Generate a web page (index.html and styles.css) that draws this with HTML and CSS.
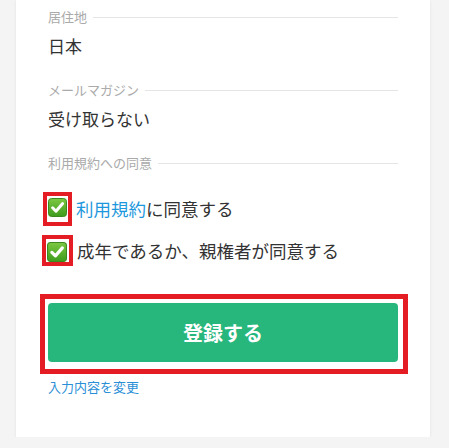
FILE: index.html
```html
<!DOCTYPE html>
<html lang="ja">
<head>
<meta charset="utf-8">
<link rel="stylesheet" href="styles.css">
</head>
<body>
<div class="card">
  <div class="field">
    <div class="field-label">居住地</div>
    <div class="field-value">日本</div>
  </div>
  <div class="field">
    <div class="field-label">メールマガジン</div>
    <div class="field-value">受け取らない</div>
  </div>
  <div class="field-label">利用規約への同意</div>
  <div class="agree-list">
    <div class="agree-row">
      <span class="annot annot-a">
        <svg class="check" width="19" height="19" viewBox="0 0 19 19">
          <defs>
            <linearGradient id="g1" x1="0" y1="0" x2="0" y2="1">
              <stop offset="0" stop-color="#7cc843"/>
              <stop offset="1" stop-color="#3e9c1c"/>
            </linearGradient>
          </defs>
          <rect x="0.5" y="0.5" width="18" height="18" rx="3" fill="url(#g1)" stroke="#3c8a1f"/>
          <path d="M4.6 9.8 L8 13.2 L14.6 5.6" fill="none" stroke="#fff" stroke-width="3" stroke-linecap="round" stroke-linejoin="round"/>
        </svg>
      </span>
      <span class="agree-text"><span class="link">利用規約</span>に同意する</span>
    </div>
    <div class="agree-row">
      <span class="annot annot-b">
        <svg class="check" width="20" height="20" viewBox="0 0 19 19">
          <defs>
            <linearGradient id="g2" x1="0" y1="0" x2="0" y2="1">
              <stop offset="0" stop-color="#7cc843"/>
              <stop offset="1" stop-color="#3e9c1c"/>
            </linearGradient>
          </defs>
          <rect x="0.5" y="0.5" width="18" height="18" rx="3" fill="url(#g2)" stroke="#3c8a1f"/>
          <path d="M4.6 9.8 L8 13.2 L14.6 5.6" fill="none" stroke="#fff" stroke-width="3" stroke-linecap="round" stroke-linejoin="round"/>
        </svg>
      </span>
      <span class="agree-text">成年であるか、親権者が同意する</span>
    </div>
  </div>
  <div class="submit-annot">
    <button class="submit-btn" type="button">登録する</button>
  </div>
  <a class="edit-link" href="#">入力内容を変更</a>
</div>
</body>
</html>
```

FILE: styles.css
```css
* { box-sizing: border-box; }
html, body {
  margin: 0;
  padding: 0;
  background: #f4f4f4;
}
body {
  font-family: "Noto Sans CJK JP", "Noto Sans", sans-serif;
  color: #333;
}
.card {
  margin-left: 16px;
  width: 414px;
  background: #fff;
  box-shadow: 0 1px 3px rgba(0, 0, 0, 0.08);
  padding: 8px 32px 41px 32px;
}
.field {
  margin-bottom: 23px;
}
.field-label {
  display: flex;
  align-items: center;
  gap: 6px;
  font-size: 13px;
  line-height: 18px;
  color: #aaa;
}
.field-label::after {
  content: "";
  flex: 1;
  height: 1px;
  background: #e5e5e5;
}
.field-value {
  margin-top: 8px;
  font-size: 17px;
  line-height: 24px;
  color: #333;
}
.agree-list {
  margin-top: 20px;
  display: flex;
  flex-direction: column;
  gap: 9px;
}
.agree-row {
  display: flex;
  align-items: center;
  height: 33px;
}
.annot {
  display: flex;
  border: 4px solid #e41c23;
  background: #fff;
}
.annot-a {
  margin-left: -5px;
  width: 29px;
  height: 34px;
  padding: 2px 0 0 1px;
}
.annot-b {
  margin-left: -6px;
  width: 31px;
  height: 31px;
  padding: 3px 0 0 1px;
}
.check { display: block; }
.agree-text {
  margin-left: 4px;
  font-size: 17.5px;
  line-height: 24px;
  color: #333;
}
.link { color: #1e98dd; }
.submit-annot {
  margin-top: 27px;
  margin-left: -8px;
  width: 368px;
  height: 80px;
  border: 5px solid #e41c23;
  padding: 4px 5px 7px 3px;
}
.submit-btn {
  display: block;
  width: 350px;
  height: 59px;
  border: none;
  border-radius: 4px;
  background: #27b67c;
  color: #fff;
  font-family: "Noto Sans CJK JP", "Noto Sans", sans-serif;
  font-size: 20px;
  font-weight: 700;
  padding: 0;
}
.edit-link {
  display: block;
  margin-top: 4px;
  font-size: 13px;
  line-height: 18px;
  color: #2a8fd6;
  text-decoration: none;
}
```
